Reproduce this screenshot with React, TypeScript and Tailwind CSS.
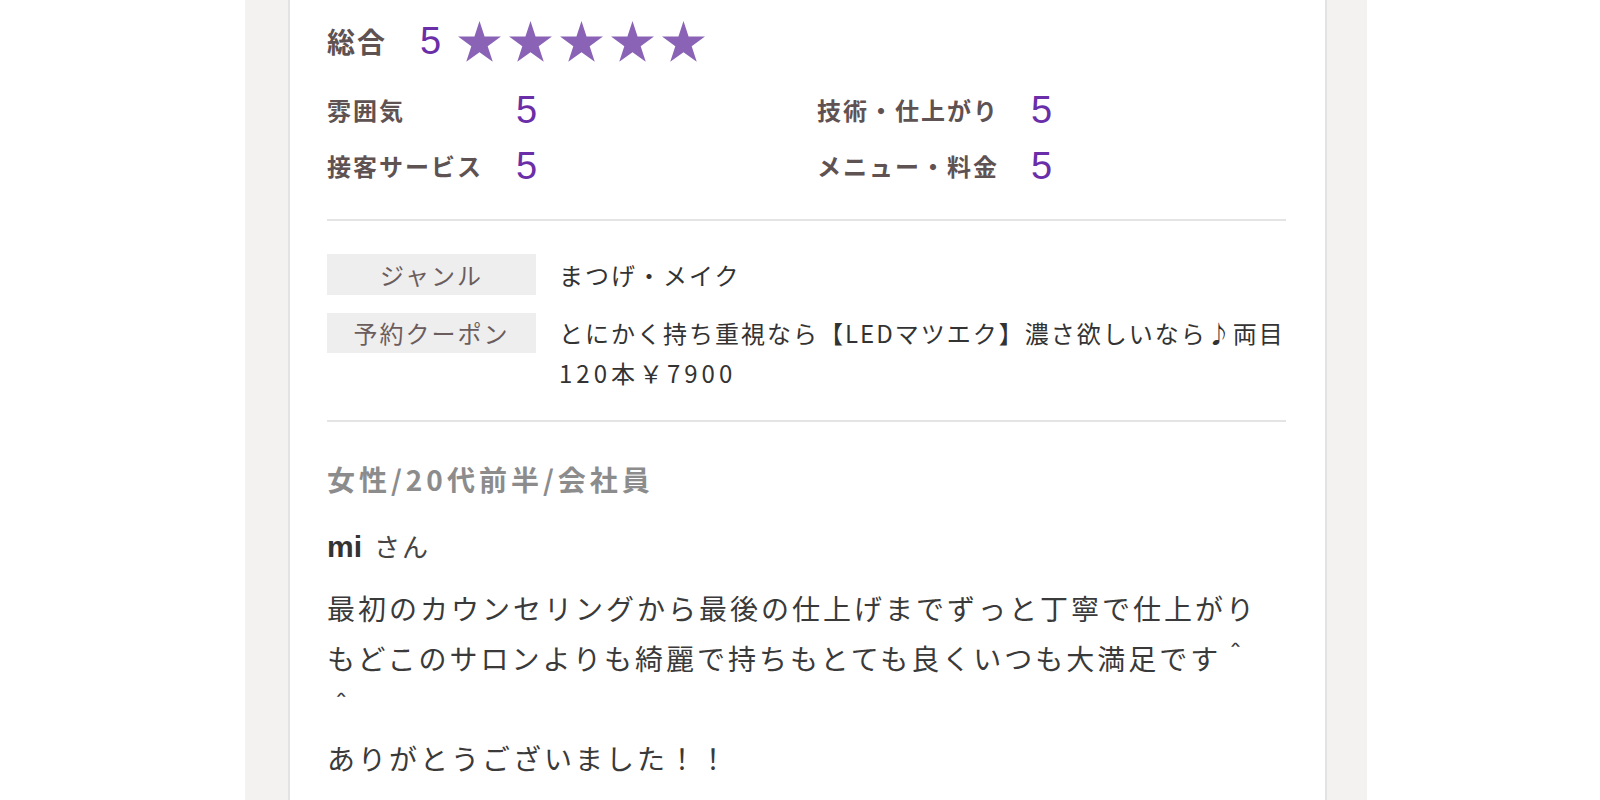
const jp = "font-['Noto_Sans_CJK_JP',sans-serif]";
const num = "font-['Liberation_Sans','Noto_Sans_CJK_JP',sans-serif]";

const Star = () => (
  <svg viewBox="0 0 44 42" className="h-[41px] w-[43px]" fill="#8b63b6">
    <path d="M22 0L27.18 15.96L44 15.96L30.39 25.83L35.58 41.8L22 31.92L8.42 41.8L13.61 25.83L0 15.96L16.82 15.96Z" />
  </svg>
);

const subRatings = [
  ["雰囲気", "5", "技術・仕上がり", "5"],
  ["接客サービス", "5", "メニュー・料金", "5"],
];

const RatingCell = ({ label, value, width }: { label: string; value: string; width: string }) => (
  <div className="flex h-[40px] items-center">
    <span className={`${jp} ${width} text-[24px] font-bold tracking-[2px] text-[#5f5252]`}>{label}</span>
    <span className={`${num} text-[38px] leading-none text-[#6a2ea8]`}>{value}</span>
  </div>
);

const App = () => {
  return (
    <div className="h-[800px] overflow-hidden bg-white">
      <div className="ml-[245px] h-full w-[1122px] bg-[#f3f2f0]">
        <div className="ml-[43px] h-full w-[1039px] border-x-2 border-[#e3e3e3] bg-white pl-[37px] pr-[39px] pt-[21px]">
          {/* overall */}
          <div className="flex h-[40px] items-center">
            <span className={`${jp} w-[93px] text-[28px] font-bold tracking-[2px] text-[#5f5252]`}>総合</span>
            <span className={`${num} text-[38px] leading-none text-[#6a2ea8]`}>5</span>
            <div className="ml-[17px] flex gap-[8px]">
              <Star />
              <Star />
              <Star />
              <Star />
              <Star />
            </div>
          </div>

          <div className="mt-[29px] flex flex-col gap-[16px]">
            {subRatings.map((r) => (
              <div key={r[0]} className="grid grid-cols-[490px_1fr]">
                <RatingCell label={r[0]} value={r[1]} width="w-[189px]" />
                <RatingCell label={r[2]} value={r[3]} width="w-[214px]" />
              </div>
            ))}
          </div>

          <div className="mt-[33px] h-[2px] bg-[#e4e4e4]" />

          {/* genre / coupon */}
          <div className={`${jp} mt-[33px] flex flex-col gap-[18px] text-[24px] tracking-[2px]`}>
            <div className="flex">
              <div className="flex h-[41px] w-[209px] shrink-0 items-center justify-center bg-[#eeeeee] text-[#6b5d5d]">
                ジャンル
              </div>
              <div className="ml-[23px] leading-[41px] text-[#333333]">まつげ・メイク</div>
            </div>
            <div className="flex">
              <div className="flex h-[40px] w-[209px] shrink-0 items-center justify-center bg-[#eeeeee] text-[#6b5d5d]">
                予約クーポン
              </div>
              <div className="ml-[23px] whitespace-nowrap leading-[40px] text-[#333333]">
                とにかく持ち重視なら【LEDマツエク】濃さ欲しいなら♪両目
                <br />
                <span className="tracking-[4px]">120本￥7900</span>
              </div>
            </div>
          </div>

          <div className="mt-[27px] h-[2px] bg-[#e4e4e4]" />

          {/* reviewer */}
          <div className={`${jp} mt-[37px] text-[28px] font-bold leading-[40px] tracking-[4px] text-[#8c8c8c]`}>
            女性/20代前半/会社員
          </div>
          <div className="mt-[27px] flex h-[40px] items-baseline">
            <span className={`${num} text-[30px] font-bold leading-[40px] text-[#333333]`}>mi</span>
            <span className={`${jp} ml-[12px] text-[26px] leading-[40px] tracking-[2px] text-[#444444]`}>さん</span>
          </div>
          <p className={`${jp} mt-[17px] whitespace-nowrap text-[28px] leading-[50px] tracking-[3px] text-[#3a3a3a]`}>
            最初のカウンセリングから最後の仕上げまでずっと丁寧で仕上がり
            <br />
            もどこのサロンよりも綺麗で持ちもとても良くいつも大満足です＾
            <br />
            ＾
            <br />
            ありがとうございました！！
          </p>
        </div>
      </div>
    </div>
  );
};

export default App;
